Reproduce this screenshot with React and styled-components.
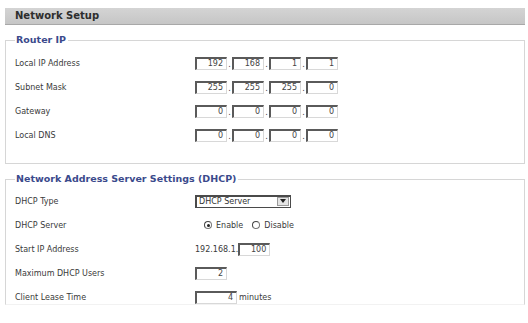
import React from 'react'
import styled, { createGlobalStyle } from 'styled-components'

const GlobalStyle = createGlobalStyle`
  body {
    margin: 0;
    background: #fff;
    font-family: 'DejaVu Sans', Verdana, sans-serif;
    color: #3a3a3a;
  }
`

const Page = styled.div`
  width: 528px;
  height: 323px;
  box-sizing: border-box;
  padding: 8px 3px 0 5px;
  overflow: hidden;
`

const Header = styled.div`
  height: 17px;
  box-sizing: border-box;
  padding-left: 10px;
  background: linear-gradient(to bottom, #d4d4d4, #c6c6c6);
  border-bottom: 1px solid #a8a8a8;
  font-size: 10px;
  font-weight: bold;
  line-height: 16px;
  color: #2e2e2e;
`

const Section = styled.fieldset`
  margin: ${({ top }) => top}px 0 0 0;
  padding: ${({ pad }) => pad}px 8px 0 9px;
  border: 1px solid #d6d6d6;
  border-bottom-color: ${({ open }) => (open ? '#f2f2f2' : '#d6d6d6')};
  height: ${({ h }) => h}px;
  box-sizing: border-box;
`

const Legend = styled.legend`
  padding: 0 2px 0 1px;
  font-size: 9.5px;
  font-weight: bold;
  line-height: 12px;
  color: #3b4a8c;
`

const Row = styled.div`
  display: flex;
  align-items: center;
  height: 24px;
  font-size: 8px;
`

const Label = styled.div`
  width: 180px;
  flex-shrink: 0;
`

const Field = styled.div`
  display: flex;
  align-items: center;
`

const Box = styled.div`
  width: ${({ w }) => w || 32}px;
  height: 13px;
  box-sizing: border-box;
  border-top: 2px solid #5a5a5a;
  border-left: 2px solid #5a5a5a;
  border-right: 1px solid #d8d8d8;
  border-bottom: 1px solid #d8d8d8;
  background: #fff;
  text-align: right;
  padding-right: 3px;
  font-size: 8px;
  line-height: 10px;
  color: #444;
`

const Dot = styled.span`
  width: 5px;
  text-align: center;
  font-size: 8px;
  line-height: 8px;
  padding-top: 4px;
`

const Select = styled.div`
  width: 96px;
  height: 13px;
  box-sizing: border-box;
  display: flex;
  border: 1px solid #4a4a4a;
  border-top-width: 2px;
  border-left-width: 2px;
  background: #fff;
`

const SelectText = styled.div`
  flex: 1;
  padding-left: 2px;
  font-size: 8px;
  line-height: 10px;
  color: #333;
`

const SelectButton = styled.div`
  width: 12px;
  margin: 0 1px 1px 0;
  box-sizing: border-box;
  border: 1px solid #9a9a9a;
  background: #e4e4e4;
  display: flex;
  align-items: center;
  justify-content: center;
`

const Radio = styled.span`
  width: 8px;
  height: 8px;
  box-sizing: border-box;
  border-radius: 50%;
  border: 1px solid #777;
  border-top-color: #444;
  border-left-color: #444;
  background: #fff;
  display: flex;
  align-items: center;
  justify-content: center;
  margin: 0 4px 0 ${({ gap }) => gap}px;

  &::after {
    content: '';
    width: 3px;
    height: 3px;
    border-radius: 50%;
    background: ${({ checked }) => (checked ? '#222' : 'transparent')};
  }
`

const Text = styled.span`
  font-size: 8px;
  margin-left: ${({ gap }) => gap || 0}px;
`

const IpField = ({ parts }) => (
  <Field>
    {parts.map((p, i) => (
      <React.Fragment key={i}>
        {i > 0 && <Dot>.</Dot>}
        <Box>{p}</Box>
      </React.Fragment>
    ))}
  </Field>
)

const routerRows = [
  ['Local IP Address', ['192', '168', '1', '1']],
  ['Subnet Mask', ['255', '255', '255', '0']],
  ['Gateway', ['0', '0', '0', '0']],
  ['Local DNS', ['0', '0', '0', '0']],
]

const App = () => (
  <Page>
    <GlobalStyle />
    <Header>Network Setup</Header>

    <Section top={9} pad={5} h={130}>
      <Legend>Router IP</Legend>
      {routerRows.map(([label, parts]) => (
        <Row key={label}>
          <Label>{label}</Label>
          <IpField parts={parts} />
        </Row>
      ))}
    </Section>

    <Section top={9} pad={4} h={132} open>
      <Legend>Network Address Server Settings (DHCP)</Legend>
      <Row>
        <Label>DHCP Type</Label>
        <Select>
          <SelectText>DHCP Server</SelectText>
          <SelectButton>
            <svg width="6" height="4" viewBox="0 0 6 4">
              <path d="M0 0h6L3 4z" fill="#222" />
            </svg>
          </SelectButton>
        </Select>
      </Row>
      <Row>
        <Label>DHCP Server</Label>
        <Field>
          <Radio checked gap={9} />
          <Text>Enable</Text>
          <Radio gap={9} />
          <Text>Disable</Text>
        </Field>
      </Row>
      <Row>
        <Label>Start IP Address</Label>
        <Field>
          <Text>192.168.1.</Text>
          <Box>100</Box>
        </Field>
      </Row>
      <Row>
        <Label>Maximum DHCP Users</Label>
        <Box>2</Box>
      </Row>
      <Row>
        <Label>Client Lease Time</Label>
        <Field>
          <Box w={42}>4</Box>
          <Text gap={2}>minutes</Text>
        </Field>
      </Row>
    </Section>
  </Page>
)

export default App
